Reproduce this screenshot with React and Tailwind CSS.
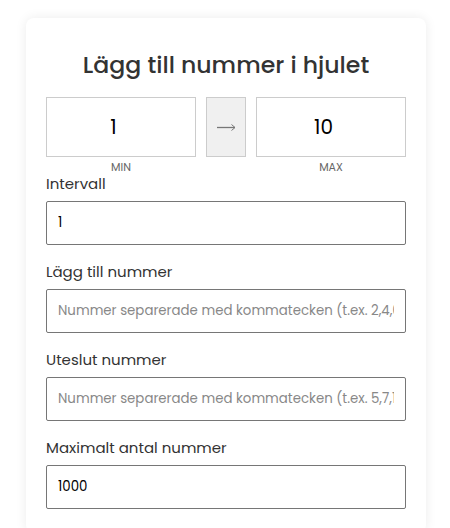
import React, { useState } from 'react';

const fields = [
  { label: 'Intervall', name: 'interval', type: 'number', value: '1', placeholder: '' },
  {
    label: 'Lägg till nummer',
    name: 'add',
    type: 'text',
    value: '',
    placeholder: 'Nummer separerade med kommatecken (t.ex. 2,4,6)',
  },
  {
    label: 'Uteslut nummer',
    name: 'exclude',
    type: 'text',
    value: '',
    placeholder: 'Nummer separerade med kommatecken (t.ex. 5,7,11)',
  },
  { label: 'Maximalt antal nummer', name: 'max', type: 'number', value: '1000', placeholder: '' },
];

const App = () => {
  const [range, setRange] = useState({ min: '1', max: '10' });
  const [formData, setFormData] = useState(
    Object.fromEntries(fields.map((f) => [f.name, f.value]))
  );

  const handleChange = (e) => {
    setFormData({ ...formData, [e.target.name]: e.target.value });
  };

  return (
    <div className="min-h-screen bg-white pt-[18px] font-['Poppins','Inter',sans-serif] text-[#333]">
      <div className="ml-[26px] w-[400px] rounded-lg bg-white px-5 pt-[29px] pb-6 shadow-[0_0_12px_rgba(0,0,0,0.08)]">
        <h2 className="mb-[14px] text-center text-[23.6px] font-medium leading-9 text-[#333]">
          Lägg till nummer i hjulet
        </h2>

        <div className="flex gap-[10px]">
          <div className="flex flex-1 flex-col items-center">
            <input
              type="number"
              value={range.min}
              onChange={(e) => setRange({ ...range, min: e.target.value })}
              className="h-[60px] w-full border border-[#ccc] bg-white text-center text-[20px] text-black outline-none"
            />
            <span className="mt-[3px] -mb-[2px] text-[11px] leading-[14px] text-[#666]">MIN</span>
          </div>
          <div className="flex h-[60px] w-[40px] items-center justify-center border border-[#ccc] bg-[#f0f0f0]">
            <svg width="19" height="8" viewBox="0 0 19 8" fill="none" stroke="#777" strokeWidth="1.3">
              <path d="M0 4.5h18" />
              <path d="M14.5 1.5L18 4.5L14.5 7.5" strokeWidth="1" />
            </svg>
          </div>
          <div className="flex flex-1 flex-col items-center">
            <input
              type="number"
              value={range.max}
              onChange={(e) => setRange({ ...range, max: e.target.value })}
              className="h-[60px] w-full border border-[#ccc] bg-white text-center text-[20px] text-black outline-none"
            />
            <span className="mt-[3px] -mb-[2px] text-[11px] leading-[14px] text-[#666]">MAX</span>
          </div>
        </div>

        <div className="flex flex-col gap-[15px]">
          {fields.map((f) => (
            <div key={f.name} className="flex flex-col">
              <label className="mb-[5px] text-[15px] leading-6 text-[#333]">{f.label}</label>
              <input
                type={f.type}
                name={f.name}
                value={formData[f.name]}
                placeholder={f.placeholder}
                onChange={handleChange}
                className="h-[44px] w-full rounded-[2px] border border-[#767676] px-[11px] text-[13.333px] text-black outline-none placeholder:text-[#888]"
              />
            </div>
          ))}
        </div>
      </div>
    </div>
  );
};

export default App;
